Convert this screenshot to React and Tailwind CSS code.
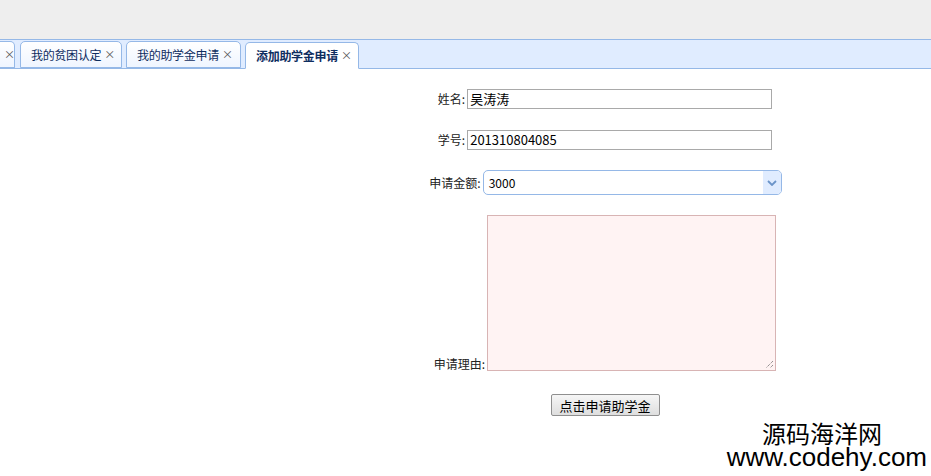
import React from 'react';

const font = { fontFamily: '"Noto Sans CJK SC", "Liberation Sans", sans-serif' };

const Tab = ({ title, active, className = '' }) => (
  <div
    className={`h-[27px] mr-[4px] flex items-center rounded-t-[5px] border border-[#95b8e7] ${active ? 'bg-white border-b-white font-bold text-[#0e2d5f]' : 'bg-gradient-to-b from-white to-[#eff5ff] text-[#0e2d5f]'} ${className}`}
  >
    {title && <span className="text-[12px] leading-none tracking-[-0.3px]">{title}</span>}
    <span className="text-[11px] leading-none text-[#555] ml-[3px] font-normal">×</span>
  </div>
);

export default function App() {
  return (
    <div className="w-[931px] h-[476px] bg-white overflow-hidden relative" style={font}>
      {/* top band */}
      <div className="h-[39px] bg-[#eeeeee]" />

      {/* tab strip */}
      <div className="h-[30px] bg-[#e0ecff] border-t border-b border-[#95b8e7] flex items-end pt-[2px] mb-[-1px]">
        <Tab className="w-[15px] border-l-0 rounded-tl-none pl-[1px] mr-[5px]" />
        <Tab title="我的贫困认定" className="w-[102px] pl-[10px]" />
        <Tab title="我的助学金申请" className="w-[115px] pl-[10px]" />
        <Tab title="添加助学金申请" active className="w-[114px] pl-[10px] relative top-[1px]" />
      </div>

      {/* form */}
      <div className="pl-[279px] text-[12px] text-[#222]">
        <div className="flex flex-col items-center">
          <div className="flex items-center mt-[21px] h-[20px]">
            <span className="mr-[2px]">姓名:</span>
            <div className="w-[305px] h-[20px] border border-[#a9a9a9] flex items-center pl-[2px] text-[13px] text-black">吴涛涛</div>
          </div>

          <div className="flex items-center mt-[21px] h-[20px]">
            <span className="mr-[2px]">学号:</span>
            <div className="w-[305px] h-[20px] border border-[#a9a9a9] flex items-center pl-[2px] text-[13px] text-black">201310804085</div>
          </div>

          <div className="flex items-center mt-[20px] h-[25px] pl-[1px]">
            <span className="mr-[2px]">申请金额:</span>
            <div className="w-[299px] h-[25px] border border-[#95b8e7] rounded-[5px] flex items-center justify-between pl-[5px] bg-white">
              <span className="text-[12px] text-black">3000</span>
              <div className="w-[18px] h-[23px] bg-[#e0ecff] rounded-r-[4px] flex items-center justify-center">
                <svg width="10" height="6" viewBox="0 0 10 6">
                  <path d="M1 1 L5 5 L9 1" fill="none" stroke="#6b94c9" strokeWidth="1.8" />
                </svg>
              </div>
            </div>
          </div>

          <div className="flex items-end mt-[20px]">
            <span className="mr-[2px] mb-[-2px]">申请理由:</span>
            <div className="w-[289px] h-[156px] border border-[#d8b4b4] bg-[#fff3f3] relative">
              <svg className="absolute right-[1px] bottom-[1px]" width="10" height="10" viewBox="0 0 10 10">
                <path d="M9 2 L2 9 M9 6 L6 9" stroke="#666" strokeWidth="1" strokeDasharray="1 1" />
              </svg>
            </div>
          </div>

          <button className="mt-[23px] w-[109px] h-[22px] border border-[#8f8f8f] bg-gradient-to-b from-[#f6f6f6] to-[#dedede] rounded-[2px] text-[13px] text-black leading-none">
            点击申请助学金
          </button>
        </div>
      </div>

      {/* watermark */}
      <div className="absolute right-[4px] bottom-[6px] flex flex-col items-end text-black">
        <span className="text-[24px] leading-[25px] mr-[45px]">源码海洋网</span>
        <span className="text-[26px] leading-[25px]" style={{ fontFamily: '"Liberation Sans", sans-serif' }}>www.codehy.com</span>
      </div>
    </div>
  );
}
